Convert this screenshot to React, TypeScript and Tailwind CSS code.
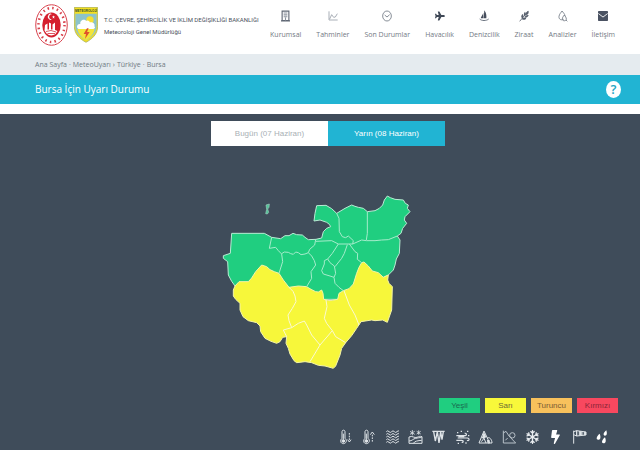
import { useState } from "react";
import type { ReactNode } from "react";
import { FaBolt, FaPlane, FaRegSnowflake } from "react-icons/fa";

const MinistryLogo = () => (
  <svg viewBox="0 0 66 84" className="w-[33px] h-[42px]" aria-label="T.C. Çevre, Şehircilik ve İklim Değişikliği Bakanlığı">
    <ellipse cx="33" cy="42" rx="31.5" ry="40.5" fill="#fff" stroke="#d8404b" strokeWidth="2" />
    <ellipse cx="33" cy="42" rx="26" ry="34" fill="none" stroke="#d8404b" strokeWidth="5" strokeDasharray="3 6.5" />
    <ellipse cx="33" cy="42" rx="20" ry="27" fill="#fff" />
    <ellipse cx="33" cy="42" rx="18.5" ry="25" fill="#d51f2e" />
    <path d="M34 21a5 6 0 1 0 0 9a4 5 0 1 1 0-9zM37 23l1 2h2l-2 2l1 2l-2-1l-2 1l1-2l-2-2h2z" fill="#fff" />
    <path d="M20 42l5-3v12h3V37l4 2v12h3V41l5-4v15l5 2-4 6c-6 4-12 4-18-1l-4-6z" fill="#fff" />
    <path d="M22 55l10-2 10 3M25 59h15" stroke="#d51f2e" strokeWidth="1.5" fill="none" />
  </svg>
);

const MeteorologyLogo = () => (
  <svg viewBox="0 0 72 108" className="w-6 h-9" aria-label="Meteoroloji Genel Müdürlüğü">
    <path d="M1 1h70v57c0 24-17 38-35 48C18 96 1 82 1 58z" fill="#f4df20" stroke="#9aa55a" strokeWidth="2" />
    <path d="M4 20h64v36c0 22-15 34-32 44C19 90 4 78 4 56z" fill="#8cc3cb" />
    <path d="M10 66h52c-3 16-14 26-26 34C24 92 13 82 10 66z" fill="#f3e538" />
    <text x="36" y="16" textAnchor="middle" fontSize="9" fontWeight="700" fill="#2c4a38" fontFamily="'Liberation Sans', sans-serif">METEOROLOJİ</text>
    <circle cx="48" cy="39" r="11" fill="#f5df32" />
    <path d="M14 66c-9-5-4-17 5-15c-2-12 12-17 18-9c4-3 10 0 10 4c11-3 17 6 14 12c4 2 2 8-3 8z" fill="#fff" />
    <path d="M39 64l-10 17h7l-3 15l14-21h-8l5-11z" fill="#e0512c" />
  </svg>
);

const BuildingIcon = () => (
  <svg viewBox="0 0 24 30" className="w-[9px] h-3" fill="none" stroke="#606875" strokeWidth="3">
    <path d="M3 2h18v25H3zM0 28h24" />
    <path d="M7 7h10M7 12h10M7 17h10M12 19v8" stroke="#8b929d" />
  </svg>
);

const ChartIcon = () => (
  <svg viewBox="0 0 30 30" className="w-[10px] h-3" fill="none" stroke="#989fa8" strokeWidth="2.5">
    <path d="M3 1v26h26" />
    <path d="M5 24l6-13 6 8 5-1 6-10" />
  </svg>
);

const ClockIcon = () => (
  <svg viewBox="0 0 30 34" className="w-[10px] h-3" fill="none" stroke="#6f7782" strokeWidth="2.5">
    <ellipse cx="15" cy="17" rx="13" ry="15" />
    <path d="M8 14l7 6 8-7" />
  </svg>
);

const BoatIcon = () => (
  <svg viewBox="0 0 30 34" className="w-[10px] h-3" fill="#454d5c">
    <path d="M16 0c6 8 7 16 6 24h-8zM13 8v16H5c2-6 5-10 8-16z" />
    <path d="M2 26c6 6 20 6 27 0" stroke="#6b7380" strokeWidth="3" fill="none" />
  </svg>
);

const WheatIcon = () => (
  <svg viewBox="0 0 30 34" className="w-[10px] h-3" fill="#59616e">
    <path d="M2 33L27 3" stroke="#59616e" strokeWidth="2.5" />
    <path d="M28 1c3 8-1 13-7 13c-1-6 1-10 7-13zM18 4c4 5 3 11-1 14c-4-5-3-10 1-14zM11 11c4 5 3 11-1 14c-5-4-4-10 1-14zM29 14c-2 7-7 9-12 6c2-5 7-7 12-6zM22 22c-2 7-7 8-13 5c2-5 7-7 13-5z" />
  </svg>
);

const DropsIcon = () => (
  <svg viewBox="0 0 30 34" className="w-[10px] h-3" fill="none" stroke="#6f7782" strokeWidth="2.5">
    <path d="M17 27C8 31 2 26 3 18C4 11 9 7 12 2c4 5 8 9 9 14" />
    <path d="M19 14c-4 5-6 8-6 12c0 7 12 7 12 0c0-4-3-8-6-12zM24 29l4 4" />
  </svg>
);

const MailIcon = () => (
  <svg viewBox="0 0 28 28" className="w-[10px] h-[10px]">
    <rect width="28" height="28" rx="2" fill="#4a5262" />
    <path d="M1 7l13 10L27 7" fill="none" stroke="#fff" strokeWidth="2.5" />
  </svg>
);

const NAV_ITEMS: { label: string; icon: ReactNode }[] = [
  { label: "Kurumsal", icon: <BuildingIcon /> },
  { label: "Tahminler", icon: <ChartIcon /> },
  { label: "Son Durumlar", icon: <ClockIcon /> },
  { label: "Havacılık", icon: <FaPlane className="w-[10px] h-[10px] text-[#3f4856]" /> },
  { label: "Denizcilik", icon: <BoatIcon /> },
  { label: "Ziraat", icon: <WheatIcon /> },
  { label: "Analizler", icon: <DropsIcon /> },
  { label: "İletişim", icon: <MailIcon /> },
];

const Header = () => (
  <header className="flex h-[54px] items-start justify-between bg-white pl-[35px] pr-[25px]">
    <a href="#" className="flex items-center gap-1.5 pt-1">
      <MinistryLogo />
      <MeteorologyLogo />
      <span className="flex flex-col pt-0.5 font-[Roboto,sans-serif] text-[6px] leading-3 text-[#4a515c] whitespace-nowrap">
        <span>T.C. ÇEVRE, ŞEHİRCİLİK VE İKLİM DEĞİŞİKLİĞİ BAKANLIĞI</span>
        <span>Meteoroloji Genel Müdürlüğü</span>
      </span>
    </a>
    <nav className="flex gap-[15px] pt-[10px]">
      {NAV_ITEMS.map(({ label, icon }) => (
        <a key={label} href="#" className="flex flex-col items-center gap-[7px] text-[7px] leading-3 text-[#737984] whitespace-nowrap">
          <span className="flex h-3 items-center">{icon}</span>
          {label}
        </a>
      ))}
    </nav>
  </header>
);

const Breadcrumb = () => (
  <nav className="flex h-[21px] items-center gap-0.5 bg-[#e5ebef] px-[35px] pt-0.5 text-[7px] text-[#6f7981]" aria-label="Konum">
    <a href="#">Ana Sayfa</a>
    <span>·</span>
    <a href="#">MeteoUyarı</a>
    <span>›</span>
    <a href="#">Türkiye</a>
    <span>·</span>
    <span>Bursa</span>
  </nav>
);

const TitleBar = () => (
  <div className="flex h-[29px] items-center justify-between bg-[#21b4d3] pl-[35px] pr-[19px]">
    <h1 className="text-[10px] text-white">Bursa İçin Uyarı Durumu</h1>
    <button type="button" aria-label="Yardım" className="flex h-[17px] w-[15px] items-center justify-center rounded-[50%] bg-white text-[13px] leading-none font-semibold text-[#21a5c2]">
      ?
    </button>
  </div>
);

const DAYS = ["Bugün (07 Haziran)", "Yarın (08 Haziran)"];

const DayTabs = () => {
  const [day, setDay] = useState(1);

  return (
    <div className="flex justify-center pl-4">
      <div role="tablist" className="grid w-[234px] grid-cols-2">
        {DAYS.map((label, i) => (
          <button
            key={label}
            type="button"
            role="tab"
            aria-selected={i === day}
            onClick={() => setDay(i)}
            className={`h-[25px] text-[8px] ${i === day ? "bg-[#21b4d3] text-white" : "bg-white text-[#a9b0b5]"}`}
          >
            {label}
          </button>
        ))}
      </div>
    </div>
  );
};

const GREEN_AREA =
  "M50 130L148 130L170 142L197 146L210 137L222 137L234 130L245 134L262 135L270 142L280 149L303 148L320 144L325 125L335 115L347 110L343 103L335 97L315 90L297 93L300 70L305 47L333 46L350 56L365 70L390 55L410 45L420 49L430 52L445 55L457 65L480 62L493 55L503 45L508 30L517 18L526 23L540 28L565 30L571 40L580 45L577 55L585 65L570 80L568 90L575 100L563 115L558 130L547 138L555 150L553 190L544 207L540 225L535 240L520 255L505 262L440 300L368 328L326 328L192 300L60 288L50 274L40 255L38 215L25 205L25 197L46 190Z";

const YELLOW_AREA =
  "M60 288L72 275L100 275L110 264L122 245L140 225L155 230L165 239L178 245L192 250L205 270L222 292L250 288L275 290L288 298L302 305L310 306L320 300L324 310L326 328L345 332L368 328L372 310L385 302L402 296L415 282L425 250L432 232L440 218L447 216L460 228L472 243L490 248L505 262L520 255L518 270L522 280L532 290L530 360L517 397L503 390L480 392L470 390L438 395L425 415L410 437L392 458L380 475L375 495L362 528L355 535L330 528L310 526L290 518L270 515L245 518L237 512L225 492L220 475L213 460L215 440L203 442L195 455L185 460L168 454L150 445L137 425L135 408L125 398L100 392L84 380L75 360L75 340L62 328L55 318L55 300Z";

const GREEN_BORDERS = [
  "M170 142L163 175L182 172L190 182L200 192L203 215L192 250",
  "M200 191L208 186L220 187L227 191L235 193L242 186L250 188L258 194L270 192L280 188L284 178L299 165L302 149",
  "M280 188L290 198L298 212L302 225L288 245L290 265L275 290",
  "M303 154L350 152L370 162L413 162",
  "M365 70L372 85L373 125L382 140L392 143L400 138L415 152L413 162L440 150L454 152L480 152L500 150L520 149L547 138",
  "M457 65L457 130L454 150",
  "M370 162L352 190L338 207L328 212L328 222L320 242L325 252L345 258L357 262L362 250L358 228L345 218L338 207",
  "M397 164L388 190L380 205L360 230",
  "M403 162L420 185L428 190L427 208L440 218",
  "M357 262L360 280L372 292L385 302",
];

const YELLOW_BORDERS = [
  "M222 292L234 304L240 318L243 335L232 355L219 375L222 392L230 413L205 420L215 440",
  "M230 413L250 400L268 393L275 405L290 435L315 465",
  "M333 330L336 350L328 385L335 400L352 422L315 465L285 515",
  "M352 422L362 440L392 458",
  "M387 302L403 345L420 375L432 405",
];

// Map units are a third of a pixel at the default width.
const WarningMap = () => (
  <svg viewBox="9 0 612 546" className="mx-auto w-[204px]" role="img" aria-label="Bursa uyarı haritası" strokeLinejoin="round">
    <path d={GREEN_AREA} fill="#20ce80" stroke="#b9ecd4" strokeWidth="3" />
    <path d={YELLOW_AREA} fill="#f7f73a" stroke="#f5f4a6" strokeWidth="3" />
    <path d="M153 45L163 42L162 52L158 57L161 67L157 72L152 71L155 58Z" fill="#55c69a" stroke="#9cc9bb" strokeWidth="2" />
    {GREEN_BORDERS.map((d) => (
      <path key={d} d={d} fill="none" stroke="#a5eccb" strokeWidth="3" />
    ))}
    {YELLOW_BORDERS.map((d) => (
      <path key={d} d={d} fill="none" stroke="#fbfad0" strokeWidth="3" />
    ))}
  </svg>
);

const LEVELS = [
  { label: "Yeşil", style: "bg-[#20ce80] text-[#1b6a50]" },
  { label: "Sarı", style: "bg-[#f8f83a] text-[#6c6d35]" },
  { label: "Turuncu", style: "bg-[#f8c15c] text-[#7a5c34]" },
  { label: "Kırmızı", style: "bg-[#f8485f] text-[#8c2638]" },
];

const Legend = () => (
  <ul className="flex justify-end gap-[5px] pr-[22px]">
    {LEVELS.map(({ label, style }) => (
      <li key={label} className={`flex h-[15px] w-[41px] items-center justify-center text-[8px] ${style}`}>
        {label}
      </li>
    ))}
  </ul>
);

const Glyph = ({ children }: { children: ReactNode }) => (
  <svg viewBox="0 0 45 48" className="w-[15px] h-4" fill="none" stroke="#dfe4e8" strokeWidth="3">
    {children}
  </svg>
);

const Thermometer = () => (
  <>
    <path d="M12 28V8c0-6 9-6 9 0v20c8 6 3 16-5 16s-11-10-4-16z" />
    <path d="M16 14v18" />
    <circle cx="16" cy="36" r="4" fill="#dfe4e8" />
  </>
);

const EVENTS: { label: string; icon: ReactNode }[] = [
  {
    label: "Soğuk",
    icon: (
      <Glyph>
        <Thermometer />
        <path d="M34 12v22" strokeDasharray="5 3" />
        <path d="M29 32l5 7 5-7" />
      </Glyph>
    ),
  },
  {
    label: "Sıcak",
    icon: (
      <Glyph>
        <Thermometer />
        <path d="M34 38V14" strokeDasharray="5 3" />
        <path d="M28 17l6-8 6 8" />
      </Glyph>
    ),
  },
  {
    label: "Sis",
    icon: (
      <Glyph>
        {[8, 16, 24, 32, 40].map((y) => (
          <path key={y} d={`M4 ${y}q4-5 8 0t8 0t8 0t8 0t6-1`} />
        ))}
      </Glyph>
    ),
  },
  {
    label: "Zirai Don",
    icon: (
      <Glyph>
        <path d="M13 3v16M6 7l14 9M20 7L6 16M32 4v13M26 7l12 8M38 7l-12 8" strokeWidth="2.5" />
        <path d="M3 24c10-5 16 4 24 1s8-4 15-2v20H3zM3 36c10 0 12-7 20-8s11-3 18-2M16 43c4-7 14-8 25-9" />
      </Glyph>
    ),
  },
  {
    label: "Buzlanma",
    icon: (
      <Glyph>
        <path d="M4 7h37M8 8l5 28 6-28 5 34 5-34 4 24 4-24" strokeWidth="4" />
      </Glyph>
    ),
  },
  {
    label: "Toz Taşınımı",
    icon: (
      <Glyph>
        <path d="M4 20h25c8 0 6-9 0-7M8 27h29c8 0 6 11-1 7M4 34h16c7 0 5 8 0 6M10 23h18" strokeWidth="3.5" />
        <path d="M6 11h4M17 7h4M36 7h4M39 20h4M8 43h4M31 42h4" strokeWidth="4" />
      </Glyph>
    ),
  },
  {
    label: "Çığ",
    icon: (
      <Glyph>
        <path d="M3 42L18 6l17 36zM11 25l6 3 7-5M15 14l7 5M10 38l8-10 6 14M28 27c8-4 14 6 14 15H30" />
        <path d="M12 26l6-17 6 14-6 5zM27 33h8v8h-7z" fill="#dfe4e8" stroke="none" />
      </Glyph>
    ),
  },
  {
    label: "Kar Erimesi",
    icon: (
      <Glyph>
        <path d="M4 5v37h37M4 12l8-5 9 14 20 21" stroke="#b8c1c9" />
        <circle cx="31" cy="19" r="8" stroke="#b8c1c9" />
        <path d="M10 34l7-7" stroke="#b8c1c9" />
      </Glyph>
    ),
  },
  { label: "Kar", icon: <FaRegSnowflake className="w-[15px] h-[14px] text-[#e9edf0]" /> },
  { label: "Gök Gürültülü Sağanak", icon: <FaBolt className="w-[15px] h-[14px] text-white" /> },
  {
    label: "Rüzgar",
    icon: (
      <Glyph>
        <path d="M5 5v39M5 8l9-3v16l-9-4" strokeWidth="3" />
        <path d="M14 5l28 4v9l-28 3zM22 6v14M30 7v12M37 8v11" />
        <path d="M23 7h6v12h-6zM37 9h5v9h-5z" fill="#dfe4e8" stroke="none" />
      </Glyph>
    ),
  },
  {
    label: "Yağmur",
    icon: (
      <Glyph>
        <path
          d="M34 4c3 10 2 16-4 16s-6-8 4-16zM14 14c4 10 3 18-4 18s-7-9 4-18zM30 25c4 10 3 18-4 18s-7-9 4-18z"
          fill="#fff"
          stroke="none"
        />
      </Glyph>
    ),
  },
];

const EventBar = () => (
  <ul className="ml-auto mr-[30px] flex w-[272px] items-center justify-between">
    {EVENTS.map(({ label, icon }) => (
      <li key={label} aria-label={label} className="flex h-4 items-center">
        {icon}
      </li>
    ))}
  </ul>
);

const App = () => (
  <div className="flex min-h-screen flex-col bg-white font-['Open_Sans','Noto_Sans',sans-serif]">
    <Header />
    <Breadcrumb />
    <TitleBar />
    <main className="mt-[10px] flex grow flex-col bg-[#3f4c5a] pt-[7px] pb-[5px] font-['Liberation_Sans',Arial,sans-serif]">
      <DayTabs />
      <div className="pt-[44px] pb-[26px]">
        <WarningMap />
      </div>
      <Legend />
      <div className="pt-4">
        <EventBar />
      </div>
    </main>
  </div>
);

export default App;
